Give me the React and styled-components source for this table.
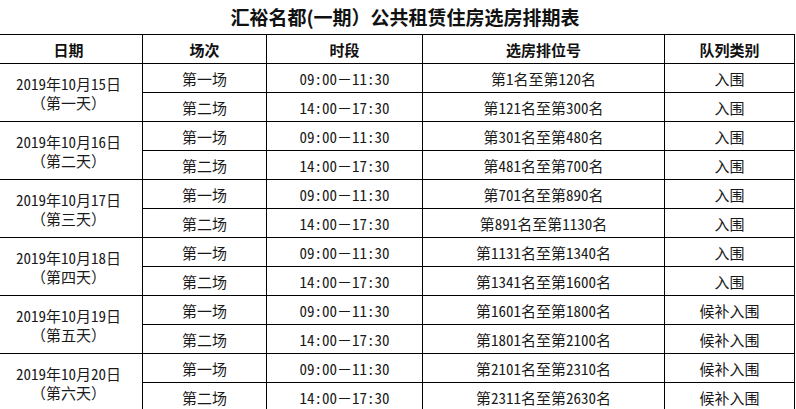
import styled, { createGlobalStyle } from "styled-components";

const GlobalStyle = createGlobalStyle`
  html, body {
    margin: 0;
    padding: 0;
    background: #fff;
  }
  body {
    width: 796px;
    height: 409px;
    overflow: hidden;
    font-family: "Noto Sans Mono CJK SC", "Noto Sans CJK SC", sans-serif;
    color: #111;
  }
`;

const Page = styled.div`
  width: 796px;
`;

const Title = styled.h1`
  margin: 0;
  padding-left: 14px;
  height: 34px;
  line-height: 33px;
  text-align: center;
  font-family: "Noto Sans CJK SC", sans-serif;
  font-size: 19px;
  font-weight: 700;
  color: #111;
`;

const Table = styled.table`
  margin-left: -6px;
  width: 800px;
  border-collapse: collapse;
  table-layout: fixed;
`;

const HeadCell = styled.th`
  height: 28px;
  padding: 0;
  border: 1px solid #000;
  font-family: "Noto Sans CJK SC", sans-serif;
  font-size: 15px;
  font-weight: 700;
  text-align: center;
  vertical-align: middle;
  line-height: 1;
`;

const Cell = styled.td`
  height: 28px;
  padding: 0;
  border: 1px solid #000;
  font-size: 15px;
  font-weight: 400;
  text-align: center;
  vertical-align: middle;
  line-height: 19px;
  white-space: nowrap;
  color: #1a1a1a;
`;

const DateLine = styled.div`
  line-height: 19px;
`;

const days = [
  { date: "2019年10月15日", label: "（第一天）", ranges: ["第1名至第120名", "第121名至第300名"], kind: "入围" },
  { date: "2019年10月16日", label: "（第二天）", ranges: ["第301名至第480名", "第481名至第700名"], kind: "入围" },
  { date: "2019年10月17日", label: "（第三天）", ranges: ["第701名至第890名", "第891名至第1130名"], kind: "入围" },
  { date: "2019年10月18日", label: "（第四天）", ranges: ["第1131名至第1340名", "第1341名至第1600名"], kind: "入围" },
  { date: "2019年10月19日", label: "（第五天）", ranges: ["第1601名至第1800名", "第1801名至第2100名"], kind: "候补入围" },
  { date: "2019年10月20日", label: "（第六天）", ranges: ["第2101名至第2310名", "第2311名至第2630名"], kind: "候补入围" },
];

const sessions = [
  { name: "第一场", time: "09:00－11:30" },
  { name: "第二场", time: "14:00－17:30" },
];

export default function App() {
  return (
    <Page>
      <GlobalStyle />
      <Title>汇裕名都(一期）公共租赁住房选房排期表</Title>
      <Table>
        <colgroup>
          <col style={{ width: 148 }} />
          <col style={{ width: 124 }} />
          <col style={{ width: 156 }} />
          <col style={{ width: 242 }} />
          <col style={{ width: 130 }} />
        </colgroup>
        <thead>
          <tr>
            <HeadCell>日期</HeadCell>
            <HeadCell>场次</HeadCell>
            <HeadCell>时段</HeadCell>
            <HeadCell>选房排位号</HeadCell>
            <HeadCell>队列类别</HeadCell>
          </tr>
        </thead>
        <tbody>
          {days.map((day) =>
            sessions.map((s, i) => (
              <tr key={day.date + i}>
                {i === 0 && (
                  <Cell rowSpan={2}>
                    <DateLine>{day.date}</DateLine>
                    <DateLine>{day.label}</DateLine>
                  </Cell>
                )}
                <Cell>{s.name}</Cell>
                <Cell>{s.time}</Cell>
                <Cell>{day.ranges[i]}</Cell>
                <Cell>{day.kind}</Cell>
              </tr>
            ))
          )}
        </tbody>
      </Table>
    </Page>
  );
}
